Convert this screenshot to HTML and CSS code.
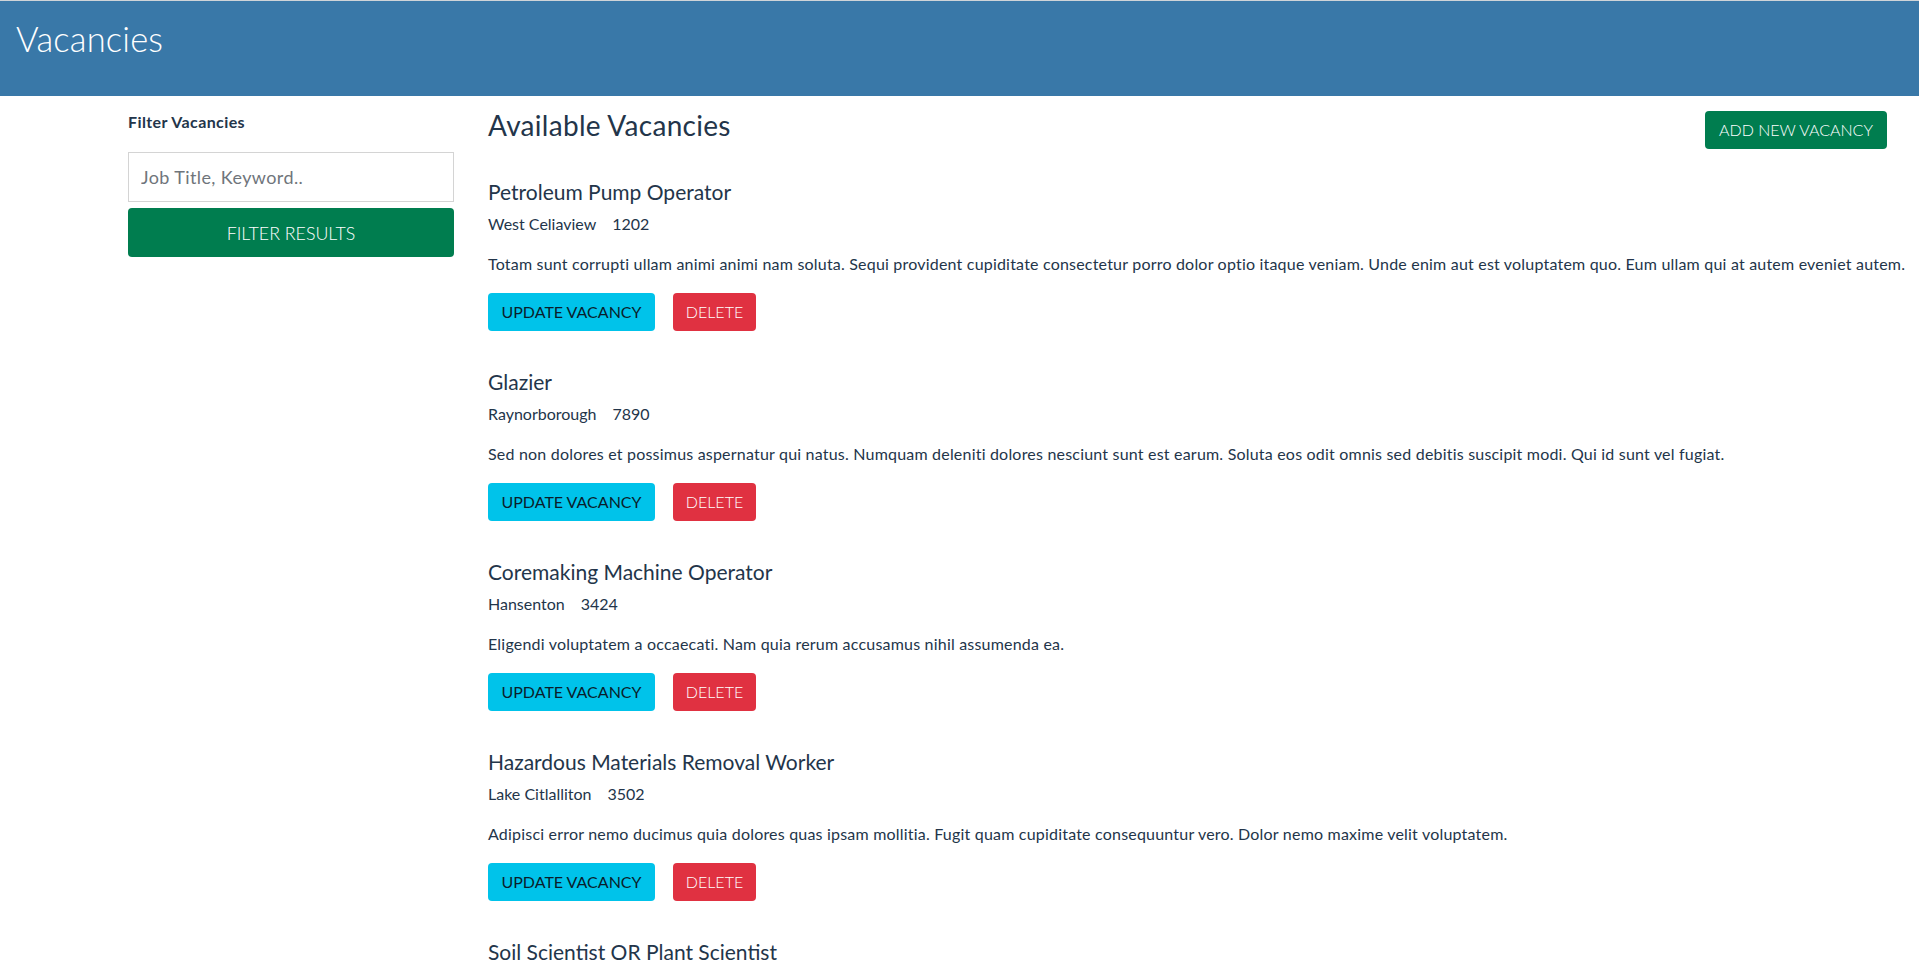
FILE: index.html
```html
<!DOCTYPE html>
<html lang="en">
<head>
<meta charset="utf-8">
<title>Vacancies</title>
<link rel="stylesheet" href="styles.css">
</head>
<body>
<header class="topbar">
  <h1 class="brand">Vacancies</h1>
</header>
<div class="layout">
  <aside class="sidebar">
    <h4 class="filter-title">Filter Vacancies</h4>
    <input class="filter-input" type="text" placeholder="Job Title, Keyword..">
    <button class="btn btn-green btn-block">FILTER RESULTS</button>
  </aside>
  <main class="content">
    <div class="content-head">
      <h2 class="page-title">Available Vacancies</h2>
      <button class="btn btn-green btn-add">ADD NEW VACANCY</button>
    </div>
    <div class="job">
      <h3 class="job-title">Petroleum Pump Operator</h3>
      <p class="job-meta"><span>West Celiaview</span><span>1202</span></p>
      <p class="job-desc">Totam sunt corrupti ullam animi animi nam soluta. Sequi provident cupiditate consectetur porro dolor optio itaque veniam. Unde enim aut est voluptatem quo. Eum ullam qui at autem eveniet autem.</p>
      <div class="job-actions"><button class="btn btn-cyan">UPDATE VACANCY</button><button class="btn btn-red">DELETE</button></div>
    </div>
    <div class="job">
      <h3 class="job-title">Glazier</h3>
      <p class="job-meta"><span>Raynorborough</span><span>7890</span></p>
      <p class="job-desc">Sed non dolores et possimus aspernatur qui natus. Numquam deleniti dolores nesciunt sunt est earum. Soluta eos odit omnis sed debitis suscipit modi. Qui id sunt vel fugiat.</p>
      <div class="job-actions"><button class="btn btn-cyan">UPDATE VACANCY</button><button class="btn btn-red">DELETE</button></div>
    </div>
    <div class="job">
      <h3 class="job-title">Coremaking Machine Operator</h3>
      <p class="job-meta"><span>Hansenton</span><span>3424</span></p>
      <p class="job-desc">Eligendi voluptatem a occaecati. Nam quia rerum accusamus nihil assumenda ea.</p>
      <div class="job-actions"><button class="btn btn-cyan">UPDATE VACANCY</button><button class="btn btn-red">DELETE</button></div>
    </div>
    <div class="job">
      <h3 class="job-title">Hazardous Materials Removal Worker</h3>
      <p class="job-meta"><span>Lake Citlalliton</span><span>3502</span></p>
      <p class="job-desc">Adipisci error nemo ducimus quia dolores quas ipsam mollitia. Fugit quam cupiditate consequuntur vero. Dolor nemo maxime velit voluptatem.</p>
      <div class="job-actions"><button class="btn btn-cyan">UPDATE VACANCY</button><button class="btn btn-red">DELETE</button></div>
    </div>
    <div class="job">
      <h3 class="job-title">Soil Scientist OR Plant Scientist</h3>
      <p class="job-meta"><span>Port Alvera</span><span>4120</span></p>
      <p class="job-desc">Quis voluptas dolorem est. Eos aut ut consequatur amet.</p>
      <div class="job-actions"><button class="btn btn-cyan">UPDATE VACANCY</button><button class="btn btn-red">DELETE</button></div>
    </div>
  </main>
</div>
</body>
</html>
```

FILE: styles.css
```css
* { box-sizing: border-box; }

html, body {
  margin: 0;
  padding: 0;
  background: #ffffff;
  font-family: Lato, "Noto Sans", "Liberation Sans", sans-serif;
  color: #23354a;
}

.topbar {
  height: 96px;
  background: #3978a8;
  border-top: 1px solid #cfd4d8;
  padding: 0 16px;
  display: flex;
  align-items: flex-start;
}

.brand {
  margin: 0;
  padding-top: 18px;
  font-size: 34.5px;
  line-height: 40px;
  font-weight: 300;
  color: #ffffff;
  letter-spacing: 0.2px;
}

.layout {
  display: flex;
  align-items: flex-start;
  padding: 0 32px 0 128px;
  gap: 34px;
}

.sidebar {
  width: 326px;
  flex: 0 0 326px;
  padding-top: 16px;
  display: flex;
  flex-direction: column;
}

.filter-title {
  margin: 0 0 20px;
  font-size: 16px;
  line-height: 20px;
  font-weight: 700;
  letter-spacing: 0.4px;
  color: #23354a;
}

.filter-input {
  height: 50px;
  width: 100%;
  border: 1px solid #d4d4d4;
  border-radius: 0;
  padding: 0 12px;
  font-family: inherit;
  font-size: 18px;
  letter-spacing: 0.4px;
  color: #23354a;
  outline: none;
  margin: 0 0 6px;
}

.filter-input::placeholder {
  color: #6f757b;
  font-weight: 400;
}

.btn {
  font-family: inherit;
  border: 0;
  border-radius: 4px;
  cursor: pointer;
  font-size: 16px;
  line-height: 20px;
  padding: 0 12px;
  height: 38px;
  white-space: nowrap;
}

.btn-block {
  width: 100%;
  height: 49px;
  font-size: 17.8px;
  font-weight: 300;
}

.btn-green {
  background: #007d4f;
  color: #ffffff;
  font-weight: 300;
}

.btn-cyan {
  background: #00c3ea;
  color: #0a1e2c;
  width: 167px;
}

.btn-red {
  background: #e03141;
  color: #ffffff;
  font-weight: 300;
  width: 83px;
}

.content {
  flex: 1;
  min-width: 0;
  padding-top: 13px;
}

.content-head {
  display: flex;
  justify-content: space-between;
  align-items: flex-start;
  margin-bottom: 31px;
}

.page-title {
  margin: 0;
  font-size: 28px;
  line-height: 32px;
  font-weight: 400;
  letter-spacing: 0.3px;
  color: #23354a;
}

.btn-add {
  margin-top: 2px;
  width: 182px;
  padding: 0;
}

.job {
  margin-bottom: 39px;
}

.job-title {
  margin: 0;
  font-size: 21px;
  line-height: 24px;
  font-weight: 400;
  color: #23354a;
}

.job-meta {
  margin: 8px 0 0;
  font-size: 16px;
  line-height: 24px;
  display: flex;
  gap: 16px;
}

.job-desc {
  margin: 16px 0 0;
  font-size: 16px;
  line-height: 24px;
  letter-spacing: 0.2px;
  white-space: nowrap;
}

.job-actions {
  margin-top: 17px;
  display: flex;
  gap: 18px;
}
```
